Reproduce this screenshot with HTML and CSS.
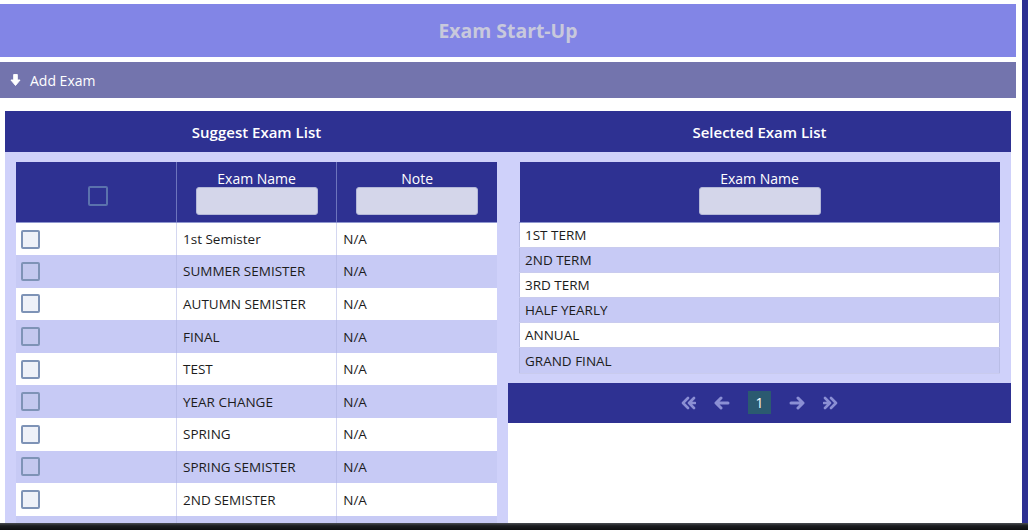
FILE: index.html
```html
<!DOCTYPE html>
<html lang="en">
<head>
<meta charset="utf-8">
<title>Exam Start-Up</title>
<link rel="stylesheet" href="styles.css">
</head>
<body>
<div class="page">
  <div class="main">
    <div class="titlebar">Exam Start-Up</div>
    <div class="addbar">
      <svg class="down" viewBox="0 0 12 14" width="11" height="14"><path d="M4 1 H8 V7 H11 L6 13 L1 7 H4 Z" fill="#fff" stroke="#fff" stroke-width="1" stroke-linejoin="round"/></svg>
      <span>Add Exam</span>
    </div>
    <div class="panels">
      <section class="panel">
        <div class="panel-head">Suggest Exam List</div>
        <div class="panel-body left-body">
          <table class="grid">
            <thead>
              <tr>
                <th class="chk-col"><span class="cb cb-head"></span></th>
                <th class="txt-col"><div class="th-title">Exam Name</div><div class="filter"></div></th>
                <th class="txt-col"><div class="th-title">Note</div><div class="filter"></div></th>
              </tr>
            </thead>
            <tbody>
              <tr><td class="chk"><span class="cb"></span></td><td>1st Semister</td><td>N/A</td></tr>
              <tr class="alt"><td class="chk"><span class="cb"></span></td><td>SUMMER SEMISTER</td><td>N/A</td></tr>
              <tr><td class="chk"><span class="cb"></span></td><td>AUTUMN SEMISTER</td><td>N/A</td></tr>
              <tr class="alt"><td class="chk"><span class="cb"></span></td><td>FINAL</td><td>N/A</td></tr>
              <tr><td class="chk"><span class="cb"></span></td><td>TEST</td><td>N/A</td></tr>
              <tr class="alt"><td class="chk"><span class="cb"></span></td><td>YEAR CHANGE</td><td>N/A</td></tr>
              <tr><td class="chk"><span class="cb"></span></td><td>SPRING</td><td>N/A</td></tr>
              <tr class="alt"><td class="chk"><span class="cb"></span></td><td>SPRING SEMISTER</td><td>N/A</td></tr>
              <tr><td class="chk"><span class="cb"></span></td><td>2ND SEMISTER</td><td>N/A</td></tr>
              <tr class="alt"><td class="chk"><span class="cb"></span></td><td></td><td></td></tr>
            </tbody>
          </table>
        </div>
      </section>
      <section class="panel">
        <div class="panel-head">Selected Exam List</div>
        <div class="panel-body right-body">
          <table class="grid sel">
            <thead>
              <tr><th class="txt-col"><div class="th-title">Exam Name</div><div class="filter"></div></th></tr>
            </thead>
            <tbody>
              <tr><td>1ST TERM</td></tr>
              <tr class="alt"><td>2ND TERM</td></tr>
              <tr><td>3RD TERM</td></tr>
              <tr class="alt"><td>HALF YEARLY</td></tr>
              <tr><td>ANNUAL</td></tr>
              <tr class="alt"><td>GRAND FINAL</td></tr>
            </tbody>
          </table>
        </div>
        <div class="pager">
          <svg class="pg" viewBox="0 0 16 14" width="16" height="14"><path d="M8 2 L3 7 L8 12 M14 2 L9 7 L14 12 M9 7 H15" fill="none" stroke="#8b8fd4" stroke-width="2.6" stroke-linejoin="round" stroke-linecap="round"/></svg>
          <svg class="pg" viewBox="0 0 16 14" width="16" height="14"><path d="M7 2 L2 7 L7 12 M2.5 7 H14" fill="none" stroke="#8b8fd4" stroke-width="3" stroke-linejoin="round" stroke-linecap="round"/></svg>
          <span class="page-num">1</span>
          <svg class="pg" viewBox="0 0 16 14" width="16" height="14"><path d="M9 2 L14 7 L9 12 M13.5 7 H2" fill="none" stroke="#8b8fd4" stroke-width="3" stroke-linejoin="round" stroke-linecap="round"/></svg>
          <svg class="pg" viewBox="0 0 16 14" width="16" height="14"><path d="M8 2 L13 7 L8 12 M2 2 L7 7 L2 12 M1 7 H7" fill="none" stroke="#8b8fd4" stroke-width="2.6" stroke-linejoin="round" stroke-linecap="round"/></svg>
        </div>
      </section>
    </div>
  </div>
  <div class="stripe"></div>
</div>
<div class="taskbar"></div>
</body>
</html>
```

FILE: styles.css
```css
html, body {
  margin: 0;
  padding: 0;
  background: #ffffff;
  overflow: hidden;
}
body {
  font-family: "Open Sans", "Liberation Sans", sans-serif;
  color: #1c1c1c;
}
.page {
  display: flex;
  height: 530px;
  overflow: hidden;
}
.main {
  width: 1016px;
  padding-top: 4px;
  display: flex;
  flex-direction: column;
  min-height: 0;
}
.stripe {
  width: 6px;
  margin-left: 6px;
  background: #2e3192;
}
.titlebar {
  height: 53px;
  background: #8285e6;
  color: #c8c9dc;
  font-size: 19.4px;
  font-weight: 700;
  display: flex;
  align-items: center;
  justify-content: center;
}
.addbar {
  margin-top: 5px;
  height: 36px;
  background: #7374ad;
  color: #fff;
  font-size: 14px;
  display: flex;
  align-items: center;
  padding-left: 10px;
}
.addbar .down {
  margin-right: 9px;
}
.panels {
  margin-top: 13px;
  padding: 0 5px;
  display: grid;
  grid-template-columns: 503px 503px;
  flex: 1;
  min-height: 0;
}
.panel {
  display: flex;
  flex-direction: column;
  min-height: 0;
}
.panel-head {
  height: 41px;
  background: #2e3192;
  color: #fff;
  font-size: 15px;
  font-weight: 600;
  display: flex;
  align-items: center;
  justify-content: center;
}
.panel-body {
  background: #cfd1fa;
}
.left-body {
  flex: 1;
  padding: 10px 11px 0 11px;
  overflow: hidden;
}
.right-body {
  padding: 10px 11px 9px 11px;
}
.grid {
  width: 100%;
  border-collapse: collapse;
  table-layout: fixed;
  font-size: 13.5px;
}
.grid th {
  background: #2e3192;
  color: #fff;
  font-weight: 400;
  font-size: 14px;
  height: 60px;
  padding: 0;
  vertical-align: top;
  border-left: 1px solid #6d74bd;
  border-bottom: 1px solid #8f97cf;
}
.grid th:first-child {
  border-left: none;
}
.chk-col {
  width: 160px;
}
.th-title {
  line-height: 17px;
  padding-top: 8px;
  text-align: center;
}
.filter {
  width: 120px;
  height: 26px;
  margin: 0 auto;
  background: #d4d6ea;
  border: 1px solid #b4b8d8;
  border-radius: 3px;
}
.cb {
  display: block;
  width: 15px;
  height: 15px;
  border: 2px solid #7e93b6;
  border-radius: 2px;
  background: #eef1f8;
}
.cb-head {
  width: 16px;
  height: 16px;
  margin: 24px auto 0;
  position: relative;
  left: 2px;
  background: transparent;
  border-color: #5b72ad;
}
.grid td {
  height: 32.6px;
  padding: 0 6px;
  border-left: 1px solid #d4d7f0;
  background: #ffffff;
  white-space: nowrap;
  box-sizing: border-box;
}
.grid td:first-child {
  border-left: none;
}
.grid tr.alt td {
  background: #c7caf5;
  border-left-color: #b9bdea;
}
.grid tr.alt .cb {
  background: #c3c8ee;
}
.grid td.chk {
  padding-left: 5px;
}
.sel td {
  height: 25.1px;
  padding: 0 5px;
  border-bottom: 1px solid #c9cbee;
}
.sel tbody {
  border: 1px solid #b9bde6;
}
.pager {
  height: 40px;
  background: #2e3192;
  display: flex;
  align-items: center;
  justify-content: center;
  gap: 18px;
}
.page-num {
  width: 23px;
  height: 23px;
  background: #2b5a70;
  color: #fff;
  font-size: 14px;
  display: flex;
  align-items: center;
  justify-content: center;
}
.taskbar {
  position: fixed;
  left: 0;
  right: 0;
  bottom: 0;
  height: 7px;
  background: linear-gradient(#4a4d52, #1b1d20 40%, #0e0f11);
}
```
